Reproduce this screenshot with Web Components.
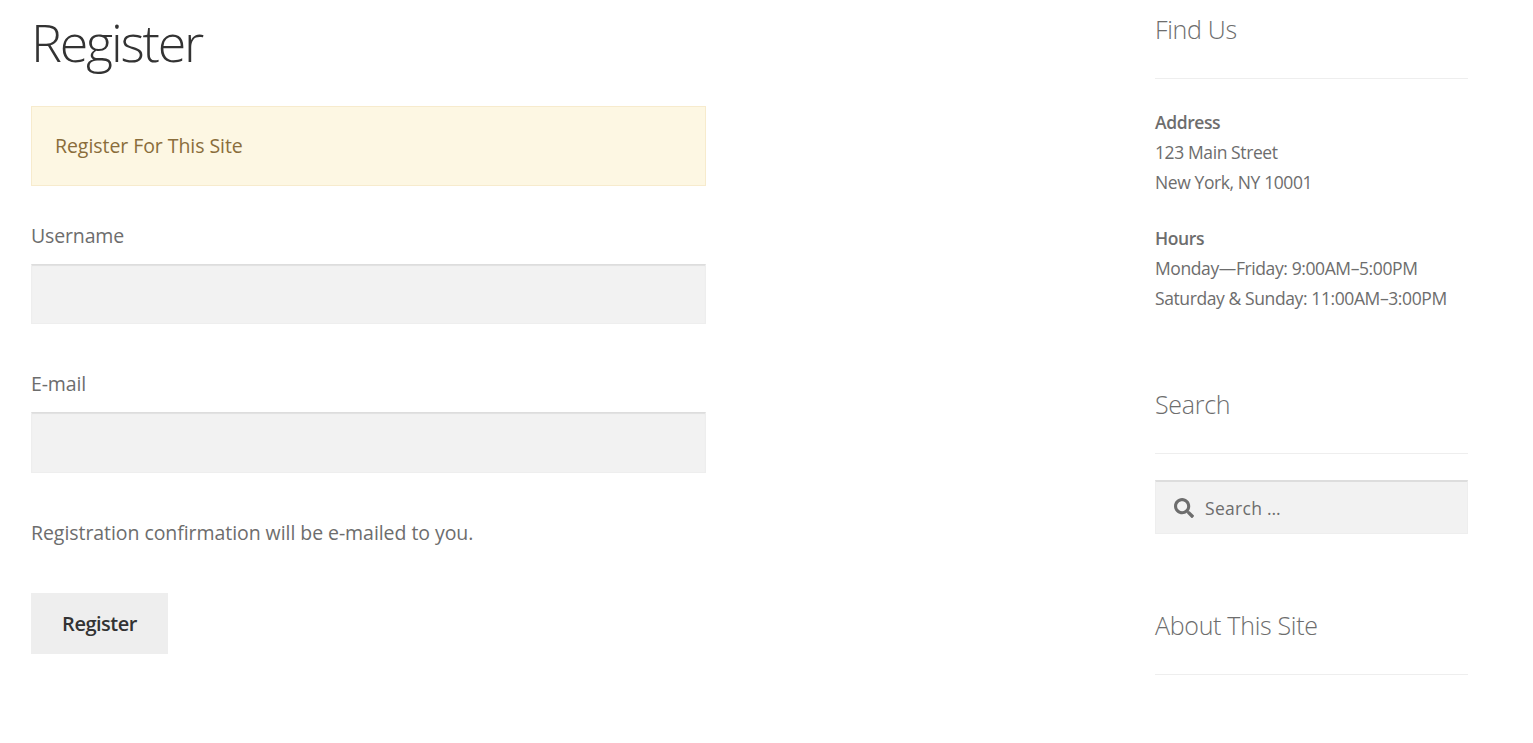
<!DOCTYPE html>
<html>
<head>
<meta charset="utf-8">
<style>
  html, body { margin: 0; height: 100%; background: #fff; overflow: hidden; }
  body { font-family: "Open Sans", "Noto Sans", sans-serif; color: #6d6d6d; }
</style>
</head>
<body>
<page-layout>
  <register-form></register-form>
  <site-sidebar slot="side"></site-sidebar>
</page-layout>
<script>
customElements.define('page-layout', class extends HTMLElement {
  constructor() {
    super()
    this.attachShadow({ mode: 'open' }).innerHTML = `
      <style>
        :host { display: flex; justify-content: space-between; padding: 0 65px 0 31px; }
        .main { width: 675px; }
        .side { width: 313px; }
      </style>
      <div class="main"><slot></slot></div>
      <div class="side"><slot name="side"></slot></div>`
  }
})

customElements.define('text-field', class extends HTMLElement {
  constructor() {
    super()
    this.attachShadow({ mode: 'open' }).innerHTML = `
      <style>
        :host { display: block; margin-bottom: 45px; }
        label { display: block; font-size: 19.5px; letter-spacing: -.15px; line-height: 30px; margin-bottom: 13px; color: #6d6d6d; }
        input { display: block; box-sizing: border-box; width: 100%; height: var(--field-h, 60px); border: 1px solid #eee; border-top-color: #ddd; background: #f2f2f2;
          box-shadow: inset 0 1px 1px rgba(0,0,0,.07); outline: 0; }
      </style>
      <label><slot></slot></label>
      <input type="text">`
  }
})

customElements.define('register-form', class extends HTMLElement {
  constructor() {
    super()
    this.attachShadow({ mode: 'open' }).innerHTML = `
      <style>
        :host { display: block; }
        h1 { font-size: 52px; font-weight: 300; line-height: 60px; margin: 12px 0 34px; color: #333; letter-spacing: -2.2px; }
        .notice { box-sizing: border-box; height: 80px; display: flex; align-items: center; padding: 0 23px 2px;
          background: #fdf7e3; border: 1px solid #f7ebcd; color: #8a6d3b; font-size: 19.5px; letter-spacing: -.06px; margin-bottom: 35px; }
        p { font-size: 19.5px; letter-spacing: -.06px; line-height: 30px; margin: 0 0 45px; color: #6d6d6d; }
        button { display: block; width: 137px; height: 61px; border: 0; background: #eee; color: #333; font: 600 20px "Open Sans", sans-serif; letter-spacing: -.5px; }
      </style>
      <h1>Register</h1>
      <div class="notice">Register For This Site</div>
      <text-field>Username</text-field>
      <text-field style="--field-h: 61px">E-mail</text-field>
      <p>Registration confirmation will be e-mailed to you.</p>
      <button>Register</button>`
  }
})

customElements.define('side-widget', class extends HTMLElement {
  constructor() {
    super()
    this.attachShadow({ mode: 'open' }).innerHTML = `
      <style>
        :host { display: block; margin-bottom: 76px; }
        h3 { font-size: 25px; font-weight: 300; letter-spacing: -.3px; line-height: 30px; margin: 0 0 26px; padding-bottom: 34px; border-bottom: 1px solid #eee; color: #6d6d6d; }
      </style>
      <h3>${this.getAttribute('heading')}</h3>
      <slot></slot>`
  }
})

customElements.define('search-box', class extends HTMLElement {
  constructor() {
    super()
    this.attachShadow({ mode: 'open' }).innerHTML = `
      <style>
        :host { display: flex; align-items: center; gap: 11px; box-sizing: border-box; height: 54px; padding-left: 18px; background: #f2f2f2; border: 1px solid #eee; border-top: 2px solid #ddd; font-size: 17.5px; letter-spacing: .3px; color: #6d6d6d; }
        svg { width: 20px; height: 20px; }
      </style>
      <svg viewBox="0 0 512 512"><path fill="#6d6d6d" d="M505 442.700L405.300 343c-4.500-4.500-10.600-7-17-7H372c27.600-35.300 44-79.700 44-128C416 93.100 322.900 0 208 0S0 93.100 0 208s93.100 208 208 208c48.300 0 92.700-16.400 128-44v16.300c0 6.400 2.500 12.500 7 17l99.700 99.700c9.400 9.400 24.600 9.400 33.900 0l28.300-28.300c9.400-9.400 9.400-24.600.1-34zM208 336c-70.700 0-128-57.200-128-128 0-70.700 57.200-128 128-128 70.700 0 128 57.200 128 128 0 70.700-57.200 128-128 128z"/></svg>
      <span>Search …</span>`
  }
})

customElements.define('site-sidebar', class extends HTMLElement {
  constructor() {
    super()
    this.attachShadow({ mode: 'open' }).innerHTML = `
      <style>
        :host { display: block; padding-top: 14px; font-size: 17.500px; letter-spacing: -.4px; line-height: 30px; white-space: nowrap; }
        p { margin: 0 0 26px; }
        .first { padding-top: 2px; }
        b { font-weight: 600; }
      </style>
      <side-widget heading="Find Us">
        <div class="first"></div>
        <p><b>Address</b><br>123 Main Street<br>New York, NY 10001</p>
        <p><b>Hours</b><br>Monday—Friday: 9:00AM–5:00PM<br>Saturday &amp; Sunday: 11:00AM–3:00PM</p>
      </side-widget>
      <side-widget heading="Search"><search-box></search-box></side-widget>
      <side-widget heading="About This Site"></side-widget>`
  }
})
</script>
</body>
</html>
